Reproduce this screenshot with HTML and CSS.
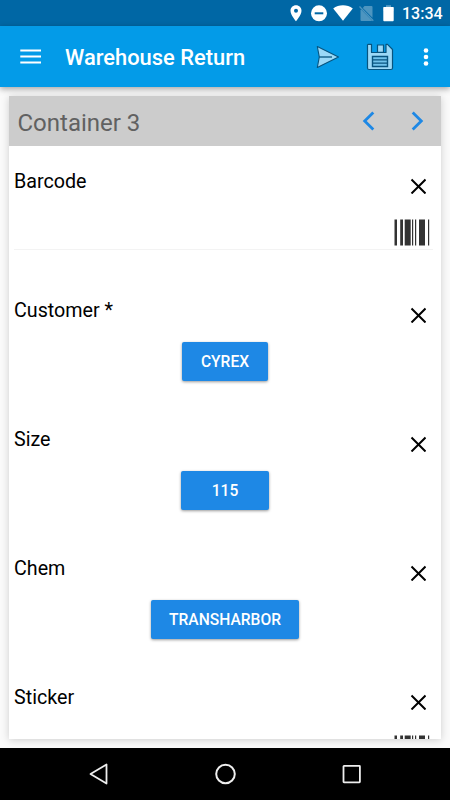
FILE: index.html
```html
<!DOCTYPE html>
<html lang="en">
<head>
    <meta charset="UTF-8">
    <meta name="viewport" content="width=device-width, initial-scale=1.0">
    <title>Warehouse Return</title>
    <link rel="stylesheet" href="styles.css">
</head>
<body>
    <div class="screen">
        <div class="status-bar">
            <svg class="pin" width="12" height="17" viewBox="0 0 12 17"><path fill="#fff" fill-rule="evenodd" d="M6 0.2C2.8 0.2 0.5 2.6 0.5 5.7C0.5 9.8 6 16.3 6 16.3S11.5 9.8 11.5 5.7C11.5 2.6 9.2 0.2 6 0.2ZM6 3.8A2 2 0 1 1 6 7.8A2 2 0 1 1 6 3.8Z"/></svg>
            <svg class="dnd" width="16" height="17" viewBox="0 0 16 17"><circle cx="8" cy="8.3" r="8" fill="#fff"/><rect x="3.7" y="7.3" width="8.6" height="2" fill="#0067a5"/></svg>
            <svg class="wifi" width="20" height="17" viewBox="0 0 20 17"><path fill="#fff" d="M10 15.8L0.2 3.5C3 1.3 6.4 0.3 10 0.3S17 1.3 19.8 3.5Z"/></svg>
            <svg class="sim" width="15" height="17" viewBox="0 0 15 17"><path fill="#4d95c0" d="M5.5 1H12.5Q13.5 1 13.5 2V12.8L3.8 3ZM2.2 4.5L13 15.5Q12.8 16 12 16H2.5Q1.5 16 1.5 15V5Z"/><path stroke="#4d95c0" stroke-width="1.3" d="M0.5 1.5L14.3 15.7"/></svg>
            <svg class="battery" width="11" height="17" viewBox="0 0 11 17"><path fill="#5c9fc6" d="M3 0.2H8V2H10.5V6H0.5V2H3Z"/><path fill="#fff" d="M0.3 2.8Q0.3 2 1.1 2H9.9Q10.7 2 10.7 2.8V15.3Q10.7 16.2 9.9 16.2H1.1Q0.3 16.2 0.3 15.3Z"/></svg>
            <span class="time">13:34</span>
        </div>

        <div class="app-bar">
            <svg class="menu" width="22" height="16" viewBox="0 0 22 16"><path stroke="#fff" stroke-width="2" d="M0.3 1.5H21M0.3 7.5H21M0.3 13.5H21"/></svg>
            <h1>Warehouse Return</h1>
            <svg class="send" width="24" height="24" viewBox="0 0 24 24"><path fill="#9bd9f7" stroke="#07547f" stroke-width="1.1" stroke-linejoin="round" d="M1.3 1.5L22.5 12L1.3 22.5L3.3 12Z"/><path stroke="#07547f" stroke-width="1.3" d="M3.3 12H16"/></svg>
            <svg class="save" width="28" height="28" viewBox="0 0 28 28"><path fill="#9bd9f7" stroke="#07547f" stroke-width="1.2" stroke-linejoin="round" d="M2 1.3H5.5V9.5H20V1.3H21.5L26.5 6.5V25Q26.5 26.5 25 26.5H3Q1.5 26.5 1.5 25V1.8Z"/><path fill="#9bd9f7" stroke="#07547f" stroke-width="1.2" d="M11.5 2H17.5V9.3H11.5Z"/><path fill="#70c3ec" stroke="#07547f" stroke-width="1.4" d="M6.5 13.5H21.5V23.5H6.5Z"/><path stroke="#07547f" stroke-width="1.3" d="M7 16.8H21M7 20.2H21"/></svg>
            <svg class="more" width="6" height="20" viewBox="0 0 6 20"><g fill="#fff"><circle cx="3" cy="3.5" r="2.3"/><circle cx="3" cy="10" r="2.3"/><circle cx="3" cy="16.5" r="2.3"/></g></svg>
        </div>

        <div class="content">
            <div class="card">
                <div class="card-header">
                    <h2>Container 3</h2>
                    <svg class="prev" width="13" height="20" viewBox="0 0 13 20"><path fill="none" stroke="#1e88e5" stroke-width="2.8" d="M11.3 1.5L2.7 10L11.3 18.5"/></svg>
                    <svg width="13" height="20" viewBox="0 0 13 20"><path fill="none" stroke="#1e88e5" stroke-width="2.8" d="M1.7 1.5L10.3 10L1.7 18.5"/></svg>
                </div>

                <div class="field">
                    <div class="field-top">
                        <label>Barcode</label>
                        <svg class="clear" width="16" height="16" viewBox="0 0 16 16"><path stroke="#000" stroke-width="2" d="M1.5 1.5L15.5 15.5M15.5 1.5L1.5 15.5"/></svg>
                    </div>
                    <div class="scan">
                        <svg width="36" height="27" viewBox="0 0 36 27"><path fill="#333" d="M0.5 0.5H3V26.5H0.5ZM6.2 0.5H9V26.5H6.2ZM10.7 0.5H16.7V26.5H10.7ZM18 0.5H19.2V26.5H18ZM21 0.5H22.2V26.5H21ZM25 0.5H31V26.5H25ZM34 0.5H35.2V26.5H34Z"/></svg>
                    </div>
                </div>

                <div class="field">
                    <div class="field-top">
                        <label>Customer *</label>
                        <svg class="clear" width="16" height="16" viewBox="0 0 16 16"><path stroke="#000" stroke-width="2" d="M1.5 1.5L15.5 15.5M15.5 1.5L1.5 15.5"/></svg>
                    </div>
                    <button type="button">CYREX</button>
                </div>

                <div class="field">
                    <div class="field-top">
                        <label>Size</label>
                        <svg class="clear" width="16" height="16" viewBox="0 0 16 16"><path stroke="#000" stroke-width="2" d="M1.5 1.5L15.5 15.5M15.5 1.5L1.5 15.5"/></svg>
                    </div>
                    <button type="button" class="short">115</button>
                </div>

                <div class="field">
                    <div class="field-top">
                        <label>Chem</label>
                        <svg class="clear" width="16" height="16" viewBox="0 0 16 16"><path stroke="#000" stroke-width="2" d="M1.5 1.5L15.5 15.5M15.5 1.5L1.5 15.5"/></svg>
                    </div>
                    <button type="button">TRANSHARBOR</button>
                </div>

                <div class="field">
                    <div class="field-top">
                        <label>Sticker</label>
                        <svg class="clear" width="16" height="16" viewBox="0 0 16 16"><path stroke="#000" stroke-width="2" d="M1.5 1.5L15.5 15.5M15.5 1.5L1.5 15.5"/></svg>
                    </div>
                    <div class="scan">
                        <svg width="36" height="27" viewBox="0 0 36 27"><path fill="#333" d="M0.5 0.5H3V26.5H0.5ZM6.2 0.5H9V26.5H6.2ZM10.7 0.5H16.7V26.5H10.7ZM18 0.5H19.2V26.5H18ZM21 0.5H22.2V26.5H21ZM25 0.5H31V26.5H25ZM34 0.5H35.2V26.5H34Z"/></svg>
                    </div>
                </div>
            </div>
        </div>

        <div class="nav-bar">
            <svg width="20" height="22" viewBox="0 0 20 22"><path fill="none" stroke="#eee" stroke-width="1.8" stroke-linejoin="round" d="M17.5 1.5V20.5L1.5 11Z"/></svg>
            <svg width="22" height="22" viewBox="0 0 22 22"><circle cx="10.5" cy="11" r="9.3" fill="none" stroke="#eee" stroke-width="2"/></svg>
            <svg width="20" height="20" viewBox="0 0 20 20"><rect x="1.5" y="1.9" width="16.4" height="16.4" rx="0.5" fill="none" stroke="#eee" stroke-width="1.8"/></svg>
        </div>
    </div>
</body>
</html>
```
FILE: styles.css
```css
* {
    box-sizing: border-box;
}

body {
    font-family: Roboto, sans-serif;
    margin: 0;
    background-color: #fafafa;
}

svg {
    display: block;
    flex-shrink: 0;
}

.screen {
    height: 800px;
    display: flex;
    flex-direction: column;
    overflow: hidden;
}

.status-bar {
    height: 26px;
    display: flex;
    align-items: center;
    justify-content: flex-end;
    padding-right: 9px;
    background-color: #0067a5;
    color: #fff;
}

.dnd {
    margin-left: 9px;
}

.wifi {
    margin-left: 6px;
}

.sim {
    margin-left: 6px;
}

.battery {
    margin-left: 9px;
}

.time {
    width: 39px;
    margin-left: 8px;
    padding-top: 2px;
    font-size: 16px;
    font-weight: 500;
    line-height: 24px;
    white-space: nowrap;
}

.app-bar {
    height: 61px;
    display: flex;
    align-items: center;
    padding: 0 21px 0 20px;
    background-color: #039be8;
    box-shadow: 0 2px 6px rgba(0, 0, 0, 0.35);
    z-index: 1;
}

h1 {
    flex: 1;
    margin: 2px 0 0 23px;
    color: #fff;
    font-size: 21.9px;
    font-weight: 500;
    white-space: nowrap;
}

.save {
    margin-left: 26px;
}

.more {
    margin-left: 29px;
}

.content {
    flex: 1;
    min-height: 0;
    padding: 9px 9px 8px;
}

.card {
    height: 643px;
    overflow: hidden;
    background-color: #fff;
    box-shadow: 0 1px 8px rgba(0, 0, 0, 0.18);
}

.card-header {
    height: 50px;
    display: flex;
    align-items: center;
    padding-right: 17px;
    background-color: #ccc;
}

h2 {
    flex: 1;
    margin: 3px 0 0 8.5px;
    color: #616161;
    font-size: 24px;
    font-weight: 400;
}

.prev {
    margin-right: 36px;
}

.field {
    height: 129px;
    display: flex;
    flex-direction: column;
    align-items: center;
    padding: 20px 5px 0;
}

.field-top {
    width: 100%;
    display: flex;
    justify-content: space-between;
    height: 46px;
}

label {
    color: #000;
    font-size: 19.7px;
    line-height: 32px;
}

.clear {
    margin: 12px 10px 0 0;
}

.scan {
    width: 419px;
    height: 38px;
    display: flex;
    align-self: flex-start;
    justify-content: flex-end;
    padding: 7px 3px 0 0;
    border-bottom: 1px solid #f3f3f3;
}

button {
    height: 39px;
    margin-top: 1px;
    padding: 0 18.5px;
    border: none;
    border-radius: 2px;
    background-color: #1e88e5;
    box-shadow: 0 1px 3px rgba(0, 0, 0, 0.4);
    color: #fff;
    font-family: inherit;
    font-size: 15.6px;
    font-weight: 500;
}

.short {
    width: 88px;
}

.nav-bar {
    height: 52px;
    display: flex;
    align-items: center;
    justify-content: space-between;
    padding: 0 88px 0 89px;
    background-color: #000;
}
```
